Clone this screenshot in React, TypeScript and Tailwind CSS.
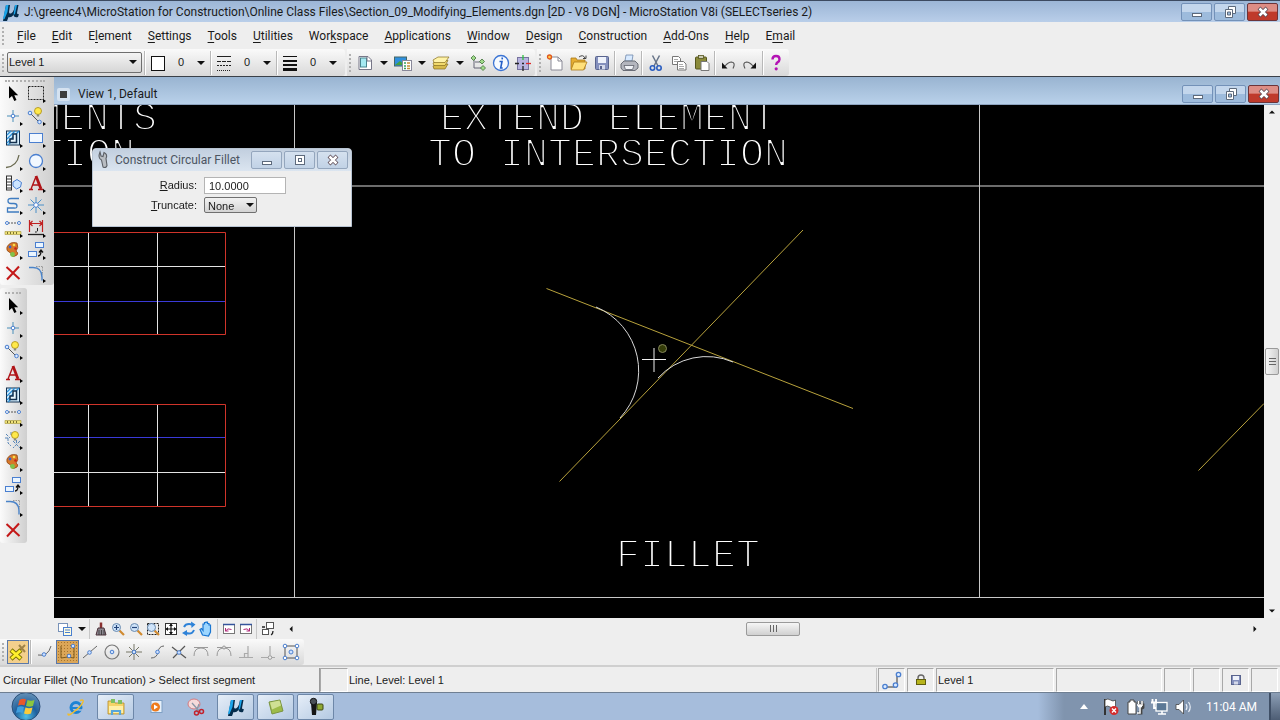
import type { ReactNode } from "react";

/* ── Icons, all drawn on a 22×22 grid ──────────────────────────────────── */
const BLUE = "#4a7fd0";

const bulb = (
  <>
    <circle cx="13" cy="6" r="3.5" fill="#ffe94a" stroke="#a88a10" strokeWidth="0.8" />
    <path d="M11.8 9.5h2.4v2h-2.4z" fill="#8a8a78" />
  </>
);

const magnifier = (
  <>
    <path d="M12.5 12.5l4.5 4.5" stroke="#d08a30" strokeWidth="2.2" />
    <circle cx="9.5" cy="9.5" r="4" fill="#cfe4fa" stroke="#6a8bb0" />
  </>
);

const ICONS: Record<string, ReactNode> = {
  pointer: <path d="M7 4v12.5l3-2.6 2.3 5 2.2-1-2.2-4.7h3.9z" fill="#000" />,
  fence: <rect x="3.5" y="4.5" width="15" height="13" fill="none" stroke="#222" strokeDasharray="2 1" />,
  point: (
    <>
      <path d="M11 5v12M5 11h12" stroke="#4a8fb8" />
      <circle cx="11" cy="11" r="1.8" fill="#fff" stroke={BLUE} />
    </>
  ),
  smartline: (
    <>
      <path d="M5 8l9 9" stroke="#555" />
      <circle cx="5" cy="8" r="1.8" fill="#dcebff" stroke={BLUE} />
      <circle cx="14.5" cy="17" r="1.8" fill="#dcebff" stroke={BLUE} />
      {bulb}
    </>
  ),
  hatch: (
    <>
      <rect x="4.5" y="4" width="13" height="14" fill="#d6efff" stroke="#14304e" />
      <path d="M5 8l4-4M5 12l8-8M5 16l12-12M6 18l3-3" stroke="#2a8fd8" strokeWidth="1.3" />
      <path d="M14.5 7v8.5H8v-3.5h3V7z" fill="#e9f7ff" stroke="#14304e" strokeWidth="1.5" />
    </>
  ),
  block: <rect x="4.5" y="6.5" width="13" height="9" fill="#f2f8ff" stroke={BLUE} />,
  arc: <path d="M4 17.5Q15 16.5 17 5" fill="none" stroke="#6a6a50" strokeWidth="1.3" />,
  circle: <circle cx="11" cy="11" r="6.5" fill="#f2f8ff" stroke={BLUE} strokeWidth="1.3" />,
  pattern: (
    <>
      <rect x="4.5" y="4" width="5" height="14" fill="#fff" stroke="#333" />
      <path d="M5 7h4M5 10h4M5 13h4M5 16h4" stroke="#333" />
      <path d="M11 10l4-2.5 4.5 3-1 4.5-4 2-3.5-3z" fill="#cde5ff" stroke={BLUE} />
    </>
  ),
  text: (
    <>
      <path d="M11 4l5 13" stroke="#b01418" strokeWidth="2.8" />
      <path d="M4 17.5h4M13 17.5h5.5M6 17L11 4.5M8 13h6" fill="none" stroke="#b01418" strokeWidth="1.4" />
    </>
  ),
  curve: <path d="M17 4.5H9q-3 0-3 2.5t3 2.5h3q3 0 3 2.5t-3 2H5.5v4H17" fill="none" stroke="#3f7cc0" strokeWidth="1.3" />,
  star: (
    <>
      <path d="M11 3v16M3 11h16M5.5 5.5l11 11M16.5 5.5l-11 11" stroke="#4a90c8" />
      <circle cx="11" cy="11" r="2.3" fill="#fff" stroke={BLUE} />
    </>
  ),
  measure: (
    <>
      <path d="M6 6h10" stroke="#555" strokeDasharray="2 1" />
      <circle cx="5" cy="6" r="1.5" fill="#fff" stroke={BLUE} />
      <circle cx="17" cy="6" r="1.5" fill="#fff" stroke={BLUE} />
      <path d="M3 14.5h16v3H3z" fill="#efe27a" stroke="#a39332" strokeWidth="0.6" />
      <path d="M5.5 15v2M8.5 15v2M11.5 15v2M14.5 15v2" stroke="#5d5419" strokeWidth="0.8" />
    </>
  ),
  dimension: (
    <>
      <path d="M4.5 3v12M17.5 3v12M5 6.5h12M7.5 4L5 6.5 7.5 9M14.5 4L17 6.5 14.5 9" fill="none" stroke="#c02020" strokeWidth="1.2" />
      <path d="M3 17.5h16" stroke="#222" strokeWidth="1.3" />
      <path d="M12.5 11v3q-1 1.5-2.5 1" fill="none" stroke="#222" />
    </>
  ),
  palette: (
    <>
      <path d="M15 4q-7-2-10 4-1 4 2 5 3 1 2 3 2 3 6 0 2-2-1-4 3-3 1-8z" fill="#d87828" stroke="#8f4812" strokeWidth="0.8" />
      <circle cx="8" cy="8" r="1.4" fill="#3b63c9" />
      <circle cx="12" cy="6" r="1.3" fill="#f4e04c" />
      <circle cx="13.5" cy="9.5" r="1.3" fill="#c9201c" />
      <circle cx="10.5" cy="15.5" r="2.4" fill="#7fc34a" />
    </>
  ),
  move: (
    <>
      <rect x="10.5" y="3.5" width="8" height="5" fill="#eaf5ff" stroke={BLUE} />
      <rect x="3.5" y="12.5" width="8" height="5" fill="#eaf5ff" stroke={BLUE} />
      <path d="M13 17q3 0 3-5M14 13.5l2-2.5 2 2.5" fill="none" stroke="#111" strokeWidth="1.3" />
    </>
  ),
  cross: <path d="M4.5 5l13 12M17 4.5L5 17.5" stroke="#c41818" strokeWidth="2" />,
  fillet: (
    <>
      <path d="M4 5.5h4q9 0 9 10v3" fill="none" stroke="#4a83c8" strokeWidth="1.4" />
      <path d="M11 4.5h7M17.5 5v8" stroke="#999" strokeDasharray="1.5 1" />
    </>
  ),
  modify: (
    <>
      <path d="M4 5l4 4M9 3v4M3 9h3M6 9v5l3 3M11 12l7 7M18 12l-7 7M14.5 11v3" fill="none" stroke="#5a87b8" strokeDasharray="3 1" />
      {bulb}
    </>
  ),
  models: (
    <>
      <path d="M5 4.5h9l3.5 3.5v9.5H5z" fill="#fff" stroke="#778" />
      <rect x="6.5" y="6" width="6" height="9" fill="#a5eaf2" stroke="#48848e" />
      <path d="M13 4v5h5" fill="none" stroke="#778" />
    </>
  ),
  references: (
    <>
      <rect x="2.5" y="5" width="12" height="9" fill="#2e8fdd" stroke="#466" />
      <path d="M3 13l5-4 5 4z" fill="#44a040" />
      <rect x="10.5" y="8.5" width="9" height="10" fill="#fff" stroke="#889" />
      <path d="M12 11h2M12 14h2M12 16.5h2" stroke="#38a060" strokeWidth="1.5" />
      <path d="M15 11h3M15 14h3M15 16.5h3" stroke="#c58f35" strokeWidth="1.5" />
    </>
  ),
  levels: (
    <>
      <path d="M3 14l4-2h11l-3 5H4z" fill="#d8bb4b" stroke="#856d1c" strokeWidth="0.7" />
      <path d="M3 11l4-2.5h11l-3 5H4z" fill="#f2da6c" stroke="#856d1c" strokeWidth="0.7" />
      <path d="M3 8l5-3h11l-4 5.5H4z" fill="#fff3a8" stroke="#856d1c" strokeWidth="0.7" />
    </>
  ),
  tree: (
    <>
      <path d="M6 7v9h8M7 10h6" fill="none" stroke="#667" />
      <path d="M5.5 3.5L8 6 5.5 8.5 3 6zM14 7l2.5 2.5L14 12l-2.5-2.5zM15 13.5l2.5 2.5-2.5 2.5-2.5-2.5z" fill="#9fd98a" stroke="#407038" strokeWidth="0.8" />
    </>
  ),
  info: (
    <>
      <circle cx="11" cy="11" r="7.5" fill="#f6faff" stroke="#3b74d4" strokeWidth="1.3" />
      <path d="M12.4 5.5l-.3 1.8M9.5 9.5H12L10.7 16h2" fill="none" stroke="#2560c8" strokeWidth="1.6" />
    </>
  ),
  accudraw: (
    <>
      <rect x="5.5" y="5.5" width="11" height="12" fill="#b7b3e0" stroke="#77739f" />
      <path d="M11 3v5" stroke="#2fc040" strokeWidth="1.3" />
      <path d="M14 11.5h5" stroke="#e02828" strokeWidth="1.3" />
      <path d="M11 14v5M3 11.5h4M10 11.5h2" stroke="#222" strokeWidth="1.3" />
    </>
  ),
  newFile: (
    <>
      <path d="M6 5h7l4 4v9H6z" fill="#fff" stroke="#8a8a96" />
      <path d="M13 5v4h4" fill="none" stroke="#8a8a96" />
      <circle cx="4.5" cy="5" r="2" fill="#ffce4c" stroke="#e0561c" strokeWidth="1.3" />
    </>
  ),
  open: (
    <>
      <path d="M3 6h5l1 2h8v9H3z" fill="#e6ae32" stroke="#a97a18" strokeWidth="0.8" />
      <path d="M6 10h13l-3.5 8H3z" fill="#ffe07a" stroke="#a97a18" strokeWidth="0.8" />
      <path d="M11 5q4-3 6 1M15 6.5h3v-3" fill="none" stroke="#444" />
    </>
  ),
  save: (
    <>
      <rect x="4.5" y="4.5" width="13" height="13" rx="1" fill="#8490bd" stroke="#59648e" />
      <rect x="7" y="5" width="8" height="6" fill="#eef2fb" />
      <rect x="8" y="13" width="6" height="4.5" fill="#d4d9ea" />
      <rect x="9" y="14" width="2" height="3" fill="#59648e" />
    </>
  ),
  saveSmall: (
    <>
      <rect x="6.5" y="6.5" width="9" height="9" fill="#8490bd" stroke="#59648e" />
      <rect x="8" y="7" width="6" height="4" fill="#eef2fb" />
      <rect x="9" y="12.5" width="4" height="3" fill="#d4d9ea" />
    </>
  ),
  print: (
    <>
      <path d="M7 9l1-6h7l-1 6z" fill="#d8eaff" stroke="#6e88ab" strokeWidth="0.8" />
      <path d="M3 12l3-3h11l3 3v4l-3 2.5H5L3 16z" fill="#b4b6be" stroke="#5f626c" strokeWidth="0.9" />
      <path d="M6 13.5h10l-1.5 4h-7z" fill="#f2f4f8" stroke="#5f626c" strokeWidth="0.8" />
    </>
  ),
  cut: (
    <>
      <path d="M7.5 3.5L13 14M14.5 3.5L9 14" stroke="#667388" strokeWidth="1.5" />
      <circle cx="7.5" cy="16" r="2.2" fill="none" stroke="#2a5dc0" strokeWidth="1.6" />
      <circle cx="14" cy="16" r="2.2" fill="none" stroke="#2a5dc0" strokeWidth="1.6" />
    </>
  ),
  copy: (
    <>
      <path d="M4.5 4.5h6l2 2v6h-8z" fill="#fff" stroke="#777" />
      <path d="M9.5 9.5h6L18 12v6H9.5z" fill="#fff" stroke="#777" />
      <path d="M6 7.5h4M6 9.5h3M11 12.5h4M11 14.5h5M11 16.5h5" stroke="#aaa" />
    </>
  ),
  paste: (
    <>
      <rect x="4.5" y="5" width="11" height="12" rx="1" fill="#8a8a3a" stroke="#55551e" />
      <rect x="7.5" y="3.5" width="5" height="3" fill="#c9c9b0" stroke="#55551e" strokeWidth="0.8" />
      <path d="M10 9.5h6l2 2v7h-8z" fill="#fff" stroke="#777" />
    </>
  ),
  undo: (
    <>
      <path d="M16 16.5q3-6-1.5-6.5-3 0-6.5 4" fill="none" stroke="#555" strokeWidth="1.1" />
      <path d="M5 10.5v6h5.5z" fill="#111" />
    </>
  ),
  help: (
    <>
      <path d="M7.5 7.5q0-3.5 3.5-3.5t3.5 3.2q0 2-2 3.2-1.3.8-1.3 2.6" fill="none" stroke="#b413b4" strokeWidth="2.4" />
      <circle cx="11.2" cy="16.8" r="1.6" fill="#b413b4" />
    </>
  ),
  style: (
    <>
      <path d="M4 4.5h14" stroke="#222" />
      <path d="M4 9.5h14" stroke="#222" strokeDasharray="4 1" />
      <path d="M4 13.5h14" stroke="#222" strokeDasharray="2 1" />
      <path d="M4 18.5h14" stroke="#222" strokeDasharray="1 1" />
    </>
  ),
  weight: (
    <>
      <path d="M4 4.5h14" stroke="#111" />
      <path d="M4 9h14" stroke="#111" strokeWidth="2" />
      <path d="M4 13h14" stroke="#111" strokeWidth="2" />
      <path d="M4 17.5h14" stroke="#111" strokeWidth="3" />
    </>
  ),
  color: <rect x="4.5" y="4.5" width="13" height="14" fill="#fff" stroke="#111" />,
  viewAttr: (
    <>
      <rect x="4.5" y="5.5" width="9" height="8" fill="#fff" stroke="#7892b8" />
      <rect x="9.5" y="9.5" width="8" height="8" fill="#fffce0" stroke="#4a7fd0" />
      <path d="M11 12h5M11 14.5h5" stroke="#4a7fd0" />
    </>
  ),
  brush: (
    <>
      <path d="M11 4.5v6" stroke="#8a3030" strokeWidth="2.5" />
      <path d="M8 10h6l2 7H6z" fill="#8c8790" stroke="#4b3038" />
      <path d="M9 12v5M11.5 12v5M14 12v5" stroke="#333" strokeWidth="0.8" />
    </>
  ),
  zoomIn: (
    <>
      {magnifier}
      <path d="M7 9.5h5M9.5 7v5" stroke="#24457a" strokeWidth="1.2" />
    </>
  ),
  zoomOut: (
    <>
      {magnifier}
      <path d="M7 9.5h5" stroke="#24457a" strokeWidth="1.2" />
    </>
  ),
  windowArea: (
    <>
      <rect x="5.5" y="5.5" width="11" height="11" fill="none" stroke="#222" strokeDasharray="2 1" />
      {magnifier}
    </>
  ),
  fit: (
    <>
      <rect x="5.5" y="5.5" width="11" height="11" fill="#fff" stroke="#333" />
      <path d="M11 6v10M6 11h10" stroke="#111" strokeWidth="1.2" />
      <path d="M11 5.5l2 2.5H9zM11 16.5l2-2.5H9zM5.5 11L8 9v4zM16.5 11L14 9v4z" fill="#111" />
    </>
  ),
  rotate: (
    <>
      <path d="M6 9q2-4 8-2.5M16 12q-2 5-8 3" fill="none" stroke="#2d82d8" strokeWidth="2" />
      <path d="M13 3.5l4.5 3-4 3.5zM9 12v6l-5-3z" fill="#2d82d8" />
    </>
  ),
  pan: <path d="M7.5 17L5 11.5l1.5-1 1.5 2V6h1.5V4.5H11V4h1.5v1.5H14V7h1.5v7l-2 4z" fill="#9cd6ff" stroke="#1976d2" strokeWidth="1.2" />,
  viewPrev: (
    <>
      <rect x="5.5" y="6.5" width="11" height="9" fill="#fff" stroke="#777" />
      <path d="M5 6.5h12" stroke="#35549c" strokeWidth="1.5" />
      <path d="M7.5 13q2-3.5 6-1.5M7.5 10v3h3" fill="none" stroke="#b02878" />
    </>
  ),
  copyView: (
    <>
      <rect x="9.5" y="4.5" width="7" height="6" fill="#fff" stroke="#555" />
      <rect x="5.5" y="11.5" width="6" height="5" fill="#fff" stroke="#555" />
      <path d="M14 17q2-1 2-4M5 9h3" fill="none" stroke="#222" strokeWidth="1.3" />
    </>
  ),
  snapLock: (
    <>
      <path d="M7 15L18 4M12 4l6 7" stroke="#a08348" strokeWidth="2" />
      <path d="M4 9l10 9M14 9L4 18" stroke="#7a7200" strokeWidth="4.5" />
      <path d="M4.5 9.5l9 8M13.5 9.5l-9 8" stroke="#fff02c" strokeWidth="2.8" />
    </>
  ),
  snapNear: (
    <>
      <path d="M4 14q10 2 13-9" fill="none" stroke="#666" />
      <circle cx="10" cy="13.5" r="1.8" fill="#cfe2ff" stroke={BLUE} />
    </>
  ),
  snapKey: (
    <>
      <path d="M4 5v12M4 17q7-2 13 0V6" fill="none" stroke="#7d5a1c" />
      <circle cx="12" cy="15" r="1.8" fill="#cfe2ff" stroke={BLUE} />
      <circle cx="16" cy="5" r="1.8" fill="#cfe2ff" stroke={BLUE} />
    </>
  ),
  snapMid: (
    <>
      <path d="M4 17L18 5" stroke="#666" />
      <circle cx="10.5" cy="11.5" r="1.8" fill="#cfe2ff" stroke={BLUE} />
    </>
  ),
  snapCenter: (
    <>
      <circle cx="11" cy="11" r="7" fill="none" stroke="#777" strokeWidth="1.2" />
      <circle cx="11" cy="11" r="1.8" fill="#cfe2ff" stroke={BLUE} />
    </>
  ),
  snapOrigin: (
    <>
      <path d="M11 3v16M3 11h16M6 6l10 10M16 6L6 16" stroke="#776" />
      <circle cx="11" cy="11" r="1.8" fill="#cfe2ff" stroke={BLUE} />
    </>
  ),
  snapBisect: (
    <>
      <path d="M5 17q6 0 7-6t6-6" fill="none" stroke="#666" />
      <circle cx="11.5" cy="11" r="1.8" fill="#cfe2ff" stroke={BLUE} />
    </>
  ),
  snapIntersect: (
    <>
      <path d="M4 6l14 11M17 5L5 17" stroke="#555" strokeWidth="1.2" />
      <circle cx="11" cy="11.5" r="1.8" fill="#cfe2ff" stroke={BLUE} />
    </>
  ),
  snapTangent: <path d="M4 6.5h14M4 15q0-8 7-8t7 8" fill="none" stroke="#999" />,
  snapTangentFrom: (
    <>
      <path d="M4 6.5h14M4 15q0-8 7-8t7 8" fill="none" stroke="#999" />
      <circle cx="11" cy="6.5" r="1.5" fill="#ddd" stroke="#999" />
    </>
  ),
  snapPerp: <path d="M4 16.5h14M13 16V5M13 12.5H9.5v4" fill="none" stroke="#aaa" strokeWidth="1.2" />,
  snapPerpFrom: (
    <>
      <path d="M4 16.5h14M13 14V5" fill="none" stroke="#aaa" strokeWidth="1.2" />
      <circle cx="13" cy="16.5" r="1.8" fill="#eee" stroke="#999" />
    </>
  ),
  snapMulti: (
    <>
      <rect x="5" y="5" width="12" height="12" fill="none" stroke="#555" />
      <circle cx="5" cy="5" r="1.8" fill="#fff" stroke={BLUE} />
      <circle cx="17" cy="5" r="1.8" fill="#fff" stroke={BLUE} />
      <circle cx="5" cy="17" r="1.8" fill="#fff" stroke={BLUE} />
      <circle cx="17" cy="17" r="1.8" fill="#fff" stroke={BLUE} />
      <circle cx="11" cy="11" r="2" fill="#cfe2ff" stroke={BLUE} />
    </>
  ),
  statusSnap: (
    <>
      <path d="M4 18h12V5" fill="none" stroke="#333" />
      <circle cx="4" cy="17.5" r="2.2" fill="#dcebff" stroke={BLUE} strokeWidth="1.3" />
      <circle cx="14.5" cy="16" r="2.2" fill="#dcebff" stroke={BLUE} strokeWidth="1.3" />
      <circle cx="17.5" cy="5.5" r="2.2" fill="#dcebff" stroke={BLUE} strokeWidth="1.3" />
    </>
  ),
  lock: (
    <>
      <path d="M8 11V9q0-3 3-3t3 3v2" fill="none" stroke="#666" strokeWidth="1.4" />
      <rect x="6.5" y="10.5" width="9" height="5" fill="#b7b41c" stroke="#5f5d10" />
    </>
  ),
  wrench: (
    <path d="M7 3l1 4 2 .5 1-4q4 2 2 6l1 7q-1 3-4 1.5L8.5 11Q4.5 9 7 3z" fill="#b9bdc2" stroke="#5c6066" strokeWidth="1.1" />
  ),
  mu: (
    <>
      <path d="M6 4h4L9 11q0 2 2 1.5 2-1 3-4L15 4h3.5L17 12q0 1.5 2 1l-1 3q-4 1-4.5-2-2.5 3-5 2L7 20H3z" fill="#052c4c" />
      <path d="M6 4h2.5L7.5 11l-3 7H3zM15 4h2l-2 9-1.5 1z" fill="#1ba4ea" />
    </>
  ),
  explorer: (
    <>
      <path d="M3 5h6l1 2h9v11H3z" fill="#f5d468" stroke="#b58b28" strokeWidth="0.8" />
      <path d="M6 3h4v4H6zM13 4h4v4h-4z" fill="#7fbf60" />
      <path d="M4 10h14v7H4z" fill="#fff0a8" />
      <path d="M7 19v-4h8v4" fill="none" stroke="#58a6d8" strokeWidth="2.2" />
    </>
  ),
  ie: (
    <>
      <circle cx="11" cy="11.5" r="5" fill="none" stroke="#1c83d4" strokeWidth="3" />
      <path d="M7 12h9.5" stroke="#1c83d4" strokeWidth="2" />
      <path d="M13.5 14h5" stroke="#a6bddc" strokeWidth="1.5" />
      <path d="M3.5 17.5Q2 20 6 18 16 11 18 6q1-3-3-1.5" fill="none" stroke="#f2bd2c" strokeWidth="1.5" />
    </>
  ),
  media: (
    <>
      <rect x="6" y="4.5" width="11" height="12" fill="#e6f0fa" stroke="#7fa0c4" />
      <circle cx="10.5" cy="11" r="4.5" fill="#ee7b1c" />
      <path d="M9 8.5v5l4-2.5z" fill="#fff" />
    </>
  ),
  snipping: (
    <>
      <ellipse cx="9" cy="8" rx="6" ry="5" fill="#f6dada" stroke="#d27a80" />
      <path d="M7 7l8 9M14 8l-3 8" stroke="#8a97a8" strokeWidth="1.3" />
      <circle cx="11.5" cy="17" r="2" fill="none" stroke="#c3222c" strokeWidth="1.5" />
      <circle cx="16.5" cy="15.5" r="2" fill="none" stroke="#c3222c" strokeWidth="1.5" />
    </>
  ),
  camtasia: (
    <>
      <path d="M4 6l11-2 3 11-11 3z" fill="#9dbb48" stroke="#7a9440" />
      <path d="M5 6.5l9.5-2L16 9.5l-9 4z" fill="#cfe094" />
    </>
  ),
  recorder: (
    <>
      <path d="M6 7h6l-1 12H7z" fill="#151515" />
      <circle cx="8.5" cy="5.5" r="3.2" fill="#4a5056" stroke="#111" />
      <rect x="12" y="8" width="6" height="6" rx="1" fill="#8fa832" stroke="#3d4716" />
    </>
  ),
  flag: (
    <>
      <path d="M5 3v16" stroke="#333" strokeWidth="2" />
      <path d="M5 4q3-2 5.5 0t5 0v7q-3 2-5.5 0T5 11z" fill="#fff" stroke="#444" strokeWidth="0.8" />
      <circle cx="14" cy="14.5" r="4.5" fill="#d42c2c" />
      <path d="M12 12.5l4 4M16 12.5l-4 4" stroke="#fff" strokeWidth="1.4" />
    </>
  ),
  battery: (
    <>
      <path d="M4 6h2V4h4v2h2v12H4z" fill="#fff" stroke="#444" />
      <path d="M14.5 5v3M18 5v3M14 9h5v2.5L17 13v4h-3" fill="none" stroke="#444" strokeWidth="2.8" />
      <path d="M14.5 5v3M18 5v3M13 9h6M14 10.5h4M16 10v7h-3" fill="none" stroke="#fff" strokeWidth="1.5" />
    </>
  ),
  network: (
    <>
      <rect x="8" y="6.5" width="11" height="8.5" fill="#5b7896" stroke="#fff" strokeWidth="1.3" />
      <path d="M10 18h8M14 15v3" stroke="#fff" strokeWidth="1.6" />
      <path d="M4.5 3v3M8 3v3M3 6.5h6M6 7v5h2" fill="none" stroke="#fff" strokeWidth="1.8" />
    </>
  ),
  volume: (
    <>
      <path d="M4 8.5h3L11.5 4v14L7 13.5H4z" fill="#fff" stroke="#444" strokeWidth="0.8" />
      <path d="M14 8q2 3 0 6M16.5 6q3.5 5 0 10" fill="none" stroke="#e8eef6" strokeWidth="1.2" />
    </>
  ),
};

function Icon({ name, flip }: { name: string; flip?: boolean }) {
  return (
    <svg viewBox="0 0 22 22" className={`block size-[22px] shrink-0 ${flip ? "-scale-x-100" : ""}`} aria-hidden="true">
      {ICONS[name]}
    </svg>
  );
}

/* Small solid triangle used by drop-downs and scroll bars */
function Caret({ dir = "down", small = false }: { dir?: "down" | "up" | "left" | "right"; small?: boolean }) {
  const paths = {
    down: "M0 2h8L4 6z",
    up: "M0 6h8L4 2z",
    left: "M6 0v8L2 4z",
    right: "M2 0v8l4-4z",
  };
  return (
    <svg viewBox="0 0 8 8" className={`block shrink-0 ${small ? "size-[6px]" : "size-2"}`} aria-hidden="true">
      <path d={paths[dir]} fill="#111" />
    </svg>
  );
}

function Tool({ name, menu, flip, wide }: { name: string; menu?: boolean; flip?: boolean; wide?: boolean }) {
  return (
    <button
      type="button"
      aria-label={name}
      className={`relative flex h-[22px] items-center justify-center ${wide ? "w-[23px]" : "w-[22px]"}`}
    >
      <Icon name={name} flip={flip} />
      {menu && (
        <svg viewBox="0 0 4 6" className="absolute right-0 bottom-0 h-[6px] w-1" aria-hidden="true">
          <path d="M0 1v4l3-2z" fill="#000" />
        </svg>
      )}
    </button>
  );
}

function Drop({ label }: { label: string }) {
  return (
    <button type="button" aria-label={label} className="flex h-5 w-4 items-center justify-center">
      <Caret />
    </button>
  );
}

function Sep() {
  return <span className="mx-px h-6 w-[2px] shrink-0 border-r border-l border-r-white border-l-[#b8b8b8]" />;
}

function Grip() {
  return <span className="mx-[2px] h-[18px] w-[3px] shrink-0 border-l-2 border-dotted border-[#b0b0b0]" />;
}

/* ── Window buttons ────────────────────────────────────────────────────── */
function WindowButtons({ dialog }: { dialog?: boolean }) {
  const base = dialog
    ? "border-[#94a6bd] bg-linear-to-b from-[#d5e1ef] to-[#c1d2e6]"
    : "border-[#7391b8] bg-linear-to-b from-[#c3d6ec] from-50% to-[#9dbbdc] to-50%";
  const close = dialog ? base : "border-[#6c3439] bg-linear-to-b from-[#dd8d85] from-45% to-[#bf3a2b] to-50%";
  const size = "flex h-[18px] w-[31px] items-center justify-center rounded-[2px] border";
  return (
    <div className="flex gap-[2px]">
      <button type="button" aria-label="Minimize" className={`${size} ${base}`}>
        <svg viewBox="0 0 14 12" className="h-3 w-[14px]">
          <rect x="2.5" y="7.5" width="9" height="3" fill="#fff" stroke="#5d6a7c" />
        </svg>
      </button>
      <button type="button" aria-label="Restore" className={`${size} ${base}`}>
        <svg viewBox="0 0 14 12" className="h-3 w-[14px]" fill="#fff" stroke="#5d6a7c">
          {dialog ? (
            <>
              <rect x="2.5" y="1.5" width="9" height="9" />
              <rect x="5.5" y="4.5" width="3" height="3" />
            </>
          ) : (
            <>
              <path d="M5.5.5h7v7h-7z" />
              <path d="M2.5 3.5h7v8h-7z" />
              <path d="M4.5 6h3v3h-3z" fill="#9dbbdc" />
            </>
          )}
        </svg>
      </button>
      <button type="button" aria-label="Close" className={`${size} ${close}`}>
        <svg viewBox="0 0 14 12" className="h-3 w-[14px]">
          <path d="M3 2l8 8M11 2l-8 8" stroke="#5d4a54" strokeWidth="4" />
          <path d="M3.5 2.5l7 7M10.5 2.5l-7 7" stroke="#fff" strokeWidth="2.5" />
        </svg>
      </button>
    </div>
  );
}

/* ── Menu and toolbars ─────────────────────────────────────────────────── */
/* before the mnemonic, mnemonic, after it */
const MENUS: [string, string, string][] = [
  ["", "F", "ile"],
  ["", "E", "dit"],
  ["E", "l", "ement"],
  ["", "S", "ettings"],
  ["", "T", "ools"],
  ["", "U", "tilities"],
  ["Wor", "k", "space"],
  ["", "A", "pplications"],
  ["", "W", "indow"],
  ["", "D", "esign"],
  ["", "C", "onstruction"],
  ["", "A", "dd-Ons"],
  ["", "H", "elp"],
  ["E", "m", "ail"],
];

const BAR = "flex items-center rounded-r-[3px] bg-linear-to-b from-[#fafafa] to-[#d9d9d9]";
const UI_FONT = "font-['Roboto','Segoe_UI',sans-serif] text-[12px]";
const SMALL_FONT = "font-['Liberation_Sans',Arial,sans-serif] text-[11px]";

function Attribute({ icon, label }: { icon: string; label: string }) {
  return (
    <div className="flex items-center">
      <Icon name={icon} />
      <span className={`w-6 text-center ${SMALL_FONT}`}>0</span>
      <Drop label={label} />
    </div>
  );
}

function MainToolbar() {
  return (
    <div className="flex h-[28px] shrink-0 items-stretch gap-[2px] border-b border-[#3a4048]">
      <div className={`${BAR} w-[345px]`}>
        <Grip />
        <div className="relative mr-px">
          <select
            aria-label="Active level"
            className={`block h-[21px] w-[135px] appearance-none rounded-[2px] border border-[#6f6f6f] bg-linear-to-b from-[#f4f4f4] to-[#d6d6d6] pl-px ${SMALL_FONT}`}
          >
            <option>Level 1</option>
          </select>
          <span className="pointer-events-none absolute top-[6px] right-[5px]">
            <Caret />
          </span>
        </div>
        <Sep />
        <Attribute icon="color" label="Color" />
        <Sep />
        <Attribute icon="style" label="Line style" />
        <Sep />
        <Attribute icon="weight" label="Line weight" />
      </div>
      <div className={`${BAR} w-[188px]`}>
        <Grip />
        <Tool name="models" />
        <Drop label="Models menu" />
        <Tool name="references" />
        <Drop label="References menu" />
        <Tool name="levels" />
        <Drop label="Levels menu" />
        <Tool name="tree" />
        <Tool name="info" />
        <Tool name="accudraw" />
      </div>
      <div className={`${BAR} w-[252px]`}>
        <Grip />
        <Tool name="newFile" wide />
        <Tool name="open" wide />
        <Tool name="save" wide />
        <Sep />
        <Tool name="print" wide />
        <Sep />
        <Tool name="cut" wide />
        <Tool name="copy" wide />
        <Tool name="paste" wide />
        <Sep />
        <Tool name="undo" />
        <Tool name="undo" flip />
        <Sep />
        <Tool name="help" />
      </div>
    </div>
  );
}

/* ── Left dock ─────────────────────────────────────────────────────────── */
const MAIN_TOOLS = [
  "pointer", "fence",
  "point", "smartline",
  "hatch", "block",
  "arc", "circle",
  "pattern", "text",
  "curve", "star",
  "measure", "dimension",
  "palette", "move",
  "cross", "fillet",
];

const TASK_TOOLS = [
  "pointer", "point", "smartline", "text", "hatch", "measure",
  "modify", "palette", "move", "fillet", "cross",
];

function Dock() {
  return (
    <aside className="flex w-[54px] shrink-0 flex-col items-start gap-[3px] bg-[#eeeeee]">
      <div className="w-full rounded-b-[3px] bg-linear-to-r from-[#fbfbfb] to-[#cfcfcf] pb-px pl-px">
        <div className="mx-1 h-[5px] w-10 border-b-2 border-dotted border-[#b0b0b0]" />
        <div className="grid h-[202px] w-[46px] grid-cols-2 grid-rows-9 items-center">
          {MAIN_TOOLS.map((name, i) => (
            <Tool key={name} name={name} wide menu={i !== 0 && name !== "cross"} />
          ))}
        </div>
      </div>
      <div className="w-[27px] rounded-[3px] bg-linear-to-r from-[#fbfbfb] to-[#cfcfcf] pb-[2px] pl-px">
        <div className="mx-1 h-[6px] w-4 border-b-2 border-dotted border-[#b0b0b0]" />
        <div className="grid h-[247px] w-[23px] grid-rows-11 items-center">
          {TASK_TOOLS.map((name) => (
            <Tool key={name} name={name} wide menu={name !== "cross"} />
          ))}
        </div>
      </div>
    </aside>
  );
}

/* ── Drawing ───────────────────────────────────────────────────────────── */
/* The black outline over the white fill leaves a hairline of each letter */
const LETTERING =
  "fill-white stroke-black stroke-[2.1px] font-['Liberation_Mono','Courier_New',monospace] text-[40px]";

function Drawing() {
  return (
    <svg className="absolute inset-0 h-full w-full will-change-transform" role="img" aria-label="View 1">
      <g className={LETTERING}>
        <text x="-17" y="25">MENTS</text>
        <text x="-15" y="61">TION</text>
        <text x="386" y="25">EXTEND ELEMENT</text>
        <text x="374" y="61">TO INTERSECTION</text>
        <text x="562" y="462">FILLET</text>
      </g>

      {/* sheet grid */}
      <g fill="none">
        <path d="M0 81h1210" strokeWidth="2" stroke="#6c6c6c" />
        <path d="M240.5 0v492M925.5 0v492M0 492.5h1210" stroke="#c8c8c8" />
      </g>

      {/* tables */}
      <g fill="none">
        <path d="M0 161.5h171M0 367.5h171" stroke="#e4e4e4" />
        <path d="M0 196.5h171M0 332.5h171" stroke="#3a3ad8" />
        <path d="M34.5 128v102M103.5 128v102M34.5 300v102M103.5 300v102" stroke="#e4e4e4" />
        <path d="M0 127.5h171.5v102H0M0 299.5h171.5v102H0" stroke="#d0342a" />
      </g>

      {/* segments and their fillets */}
      <path d="M492.5 183.5l306.5 120M749 125L505.5 376.5M1210 298.5l-65.5 67" stroke="#b8a23c" />
      <path d="M542 202a69 69 0 0 1 24 111M604 273a66 66 0 0 1 75-16" fill="none" stroke="#d8d8d8" />
      <path d="M588 254.5h24M600 243v24" stroke="#f0f0f0" />
      <circle cx="608.5" cy="243.5" r="4" fill="#343c08" stroke="#85875c" />
    </svg>
  );
}

function FilletDialog() {
  return (
    <section className={`absolute top-[43px] left-[38px] w-[260px] rounded-t-[4px] border border-[#b8c4d2] bg-[#eeeeee] pb-[12px] ${SMALL_FONT}`}>
      <header className="flex h-[22px] items-center rounded-t-[4px] bg-linear-to-b from-[#c2cfdf] to-[#dbe5f0] pr-[3px]">
        <Icon name="wrench" />
        <h2 className={`flex-1 text-[#4c5562] ${UI_FONT}`}>Construct Circular Fillet</h2>
        <WindowButtons dialog />
      </header>
      <div className="mt-[6px] grid grid-cols-[104px_1fr] items-center gap-x-[7px] gap-y-[3px]">
        <label htmlFor="radius" className="text-right">
          <u>R</u>adius:
        </label>
        <input
          id="radius"
          defaultValue="10.0000"
          className="h-[17px] w-[82px] border border-[#b4b4b4] bg-white px-1"
        />
        <label htmlFor="truncate" className="text-right">
          <u>T</u>runcate:
        </label>
        <div className="relative w-[53px]">
          <select
            id="truncate"
            className="block h-4 w-[53px] appearance-none rounded-[2px] border border-[#707070] bg-linear-to-b from-[#f2f2f2] to-[#d4d4d4] pl-[3px]"
          >
            <option>None</option>
          </select>
          <span className="pointer-events-none absolute top-1 right-[3px]">
            <Caret />
          </span>
        </div>
      </div>
    </section>
  );
}

const THUMB = "flex items-center justify-center rounded-[2px] border border-[#9a9a9a]";

function View() {
  return (
    <section className="flex min-w-0 flex-1 flex-col">
      <header className="flex h-[28px] shrink-0 items-center border-b border-[#8ea4c0] bg-linear-to-b from-[#99b4d1] to-[#b9d1ea] pt-[7px] pr-px pl-[3px]">
        <button type="button" aria-label="View menu" className="flex size-[13px] items-center justify-center rounded-[2px] bg-[#d5e2f0]">
          <span className="size-[7px] bg-[#3d3d3d]" />
        </button>
        <h1 className={`flex-1 pl-2 ${UI_FONT}`}>View 1, Default</h1>
        <WindowButtons />
      </header>

      <div className="flex min-h-0 flex-1">
        <div className="relative min-w-0 flex-1 overflow-hidden bg-black">
          <Drawing />
          <FilletDialog />
        </div>
        <div className="flex w-4 shrink-0 flex-col items-center justify-between bg-[#f0f0f0] py-1">
          <Caret dir="up" small />
          <div className={`${THUMB} h-[27px] w-[14px] flex-col gap-[2px] bg-linear-to-r from-[#f6f6f6] to-[#d0d0d0]`}>
            <span className="h-px w-[7px] bg-[#666]" />
            <span className="h-px w-[7px] bg-[#666]" />
            <span className="h-px w-[7px] bg-[#666]" />
          </div>
          <Caret small />
        </div>
      </div>

      <div className="flex h-[21px] shrink-0 items-center pr-4">
        <div className="flex items-center">
          <button type="button" aria-label="View attributes">
            <Icon name="viewAttr" />
          </button>
          <button type="button" aria-label="View attributes menu" className="flex w-[12px] justify-center">
            <Caret />
          </button>
          <span className="mr-[2px] ml-px h-5 w-px bg-[#c8c8c8]" />
          <div className="grid w-[123px] grid-cols-7 justify-items-center">
            {["brush", "zoomIn", "zoomOut", "windowArea", "fit", "rotate", "pan"].map((name) => (
              <button key={name} type="button" aria-label={name} className="flex w-[17px] justify-center">
                <Icon name={name} />
              </button>
            ))}
          </div>
          <span className="mx-[2px] h-5 w-px bg-[#c8c8c8]" />
          <button type="button" aria-label="View previous" className="flex w-[17px] justify-center">
            <Icon name="viewPrev" />
          </button>
          <button type="button" aria-label="View next" className="flex w-[17px] justify-center">
            <Icon name="viewPrev" flip />
          </button>
          <span className="mx-[2px] h-5 w-px bg-[#c8c8c8]" />
          <button type="button" aria-label="Copy view" className="flex w-[17px] justify-center">
            <Icon name="copyView" />
          </button>
        </div>
        <div className="flex flex-1 items-center justify-between px-[6px] pl-3">
          <Caret dir="left" small />
          <div className={`${THUMB} h-[14px] w-[54px] gap-[2px] bg-linear-to-b from-[#f6f6f6] to-[#d0d0d0]`}>
            <span className="h-[7px] w-px bg-[#666]" />
            <span className="h-[7px] w-px bg-[#666]" />
            <span className="h-[7px] w-px bg-[#666]" />
          </div>
          <Caret dir="right" small />
        </div>
      </div>
    </section>
  );
}

/* ── Snap bar, status bar, task bar ────────────────────────────────────── */
const SNAPS = [
  "snapNear", "snapKey", "snapMid", "snapCenter", "snapOrigin", "snapBisect",
  "snapIntersect", "snapTangent", "snapTangentFrom", "snapPerp", "snapPerpFrom", "snapMulti",
];

function SnapBar() {
  return (
    <div className="flex h-[26px] shrink-0">
      <div className={`${BAR} pr-[2px]`}>
        <Grip />
        <button type="button" aria-label="AccuSnap" className="flex h-6 w-[22px] items-center justify-center border border-[#5b78a8] bg-[#f3cf8c]">
          <Icon name="snapLock" />
        </button>
        <Sep />
        <div className="ml-px grid w-[268px] grid-cols-12 items-center">
          {SNAPS.map((name) => (
            <button
              key={name}
              type="button"
              aria-label={name}
              className={
                name === "snapKey"
                  ? "flex justify-center border border-[#5b78a8] bg-[#dba658] bg-[radial-gradient(#a8752c_1px,transparent_1px)] bg-size-[3px_3px]"
                  : "flex justify-center"
              }
            >
              <Icon name={name} />
            </button>
          ))}
        </div>
      </div>
    </div>
  );
}

const CELL = "mr-[2px] flex items-center border border-t-[#a8a8a8] border-r-white border-b-white border-l-[#a8a8a8]";

function StatusBar() {
  return (
    <footer className={`flex h-[28px] shrink-0 border-t-2 border-b border-t-[#cfcfcf] border-b-[#6f7f92] pt-px ${SMALL_FONT}`}>
      <p className="flex w-[320px] items-center border-r border-[#9a9a9a] pl-[3px]">
        Circular Fillet (No Truncation) &gt; Select first segment
      </p>
      <p className="flex flex-1 items-center border-r border-[#c4c4c4]">
        <span className="mr-px h-full w-7 border border-t-[#a8a8a8] border-r-white border-b-white border-l-[#a8a8a8]" />
        Line, Level: Level 1
      </p>
      <div className={`${CELL} ml-px w-[27px] justify-center`}>
        <Icon name="statusSnap" />
      </div>
      <div className={`${CELL} w-[27px] justify-center`}>
        <Icon name="lock" />
      </div>
      <div className={`${CELL} w-[118px] pl-px`}>Level 1</div>
      <div className={`${CELL} w-[106px]`} />
      <div className={`${CELL} w-[27px]`} />
      <div className={`${CELL} w-[27px]`} />
      <div className={`${CELL} w-[27px] justify-center`}>
        <Icon name="saveSmall" />
      </div>
      <div className={`${CELL} w-[27px]`} />
    </footer>
  );
}

const TASKS = [
  { name: "ie", running: false },
  { name: "explorer", running: true },
  { name: "media", running: false },
  { name: "snipping", running: false },
  { name: "mu", running: true },
  { name: "camtasia", running: true },
  { name: "recorder", running: true },
];

function TaskBar() {
  return (
    <nav className="flex h-[27px] shrink-0 items-center bg-[#a6bddc]">
      <button type="button" aria-label="Start" className="mr-1 ml-[10px]">
        <svg viewBox="0 0 32 28" className="block h-7 w-8">
          <defs>
            <radialGradient id="orb" cx="50%" cy="85%" r="80%">
              <stop offset="0" stopColor="#4fc0e8" />
              <stop offset="0.5" stopColor="#1e5f9c" />
              <stop offset="1" stopColor="#5f8cb4" />
            </radialGradient>
          </defs>
          <circle cx="16" cy="13.5" r="14" fill="url(#orb)" stroke="#2c4f78" />
          <path d="M9.5 7q3.5-2 6.5-.5L14.5 12.5q-3-1.5-6.5 0z" fill="#e8582a" />
          <path d="M17.5 7q3.5 1.5 7 0L23 13q-3.5 1.5-7 0z" fill="#8cc63e" />
          <path d="M7.5 14q3.5-1.5 6.5 0L12.5 20q-3-1.5-6.5 0z" fill="#3f9fe0" />
          <path d="M15.5 14.5q3.5 1.5 7 0L21 20.5q-3.5 1.5-7 0z" fill="#fbcb3a" />
        </svg>
      </button>
      <div className="flex gap-[3px] pl-[11px]">
        {TASKS.map(({ name, running }) => (
          <button
            key={name}
            type="button"
            aria-label={name}
            className={`flex h-[26px] w-[37px] items-center justify-center rounded-[2px] ${
              running ? "border border-[#6d87a8] bg-linear-to-br from-[#e6eef8] to-[#b4c9e2]" : ""
            }`}
          >
            <Icon name={name} />
          </button>
        ))}
      </div>
      <div className="ml-auto flex h-full items-center bg-linear-to-r from-[#a6bddc] to-[#8094ae] to-[26px] pl-[36px]">
        <button type="button" aria-label="Show hidden icons" className="flex w-5 justify-center">
          <svg viewBox="0 0 8 5" className="h-[5px] w-2">
            <path d="M0 5h8L4 0z" fill="#fff" />
          </svg>
        </button>
        <div className="ml-[6px] flex gap-[2px]">
          <Icon name="flag" />
          <Icon name="battery" />
          <Icon name="network" />
          <Icon name="volume" />
        </div>
        <time className={`w-[75px] text-center text-white ${UI_FONT}`}>11:04 AM</time>
        <button
          type="button"
          aria-label="Show desktop"
          className="h-full w-[11px] border-l-2 border-[#3f4f66] bg-linear-to-b from-[#8d9fb6] to-[#4d5d74]"
        />
      </div>
    </nav>
  );
}

/* ── App ───────────────────────────────────────────────────────────────── */
export default function App() {
  return (
    <div className="flex h-screen flex-col overflow-hidden bg-[#eeeeee] text-[#1a1a1a]">
      <header className="flex h-[22px] shrink-0 items-center border-t border-[#3c4a60] bg-linear-to-b from-[#9cb6d6] to-[#b9cee9] pr-[2px]">
        <Icon name="mu" />
        <p className={`flex-1 pl-[2px] whitespace-nowrap ${UI_FONT}`}>
          J:\greenc4\MicroStation for Construction\Online Class Files\Section_09_Modifying_Elements.dgn [2D - V8 DGN] - MicroStation V8i (SELECTseries 2)
        </p>
        <WindowButtons />
      </header>
      <nav className="flex h-[27px] shrink-0 items-center">
        <Grip />
        <ul className={`ml-[10px] flex gap-4 ${UI_FONT}`}>
          {MENUS.map(([before, key, after]) => (
            <li key={before + key + after}>
              <button type="button">
                {before}
                <span className="underline underline-offset-2">{key}</span>
                {after}
              </button>
            </li>
          ))}
        </ul>
      </nav>
      <MainToolbar />
      <main className="flex min-h-0 flex-1">
        <Dock />
        <View />
      </main>
      <SnapBar />
      <StatusBar />
      <TaskBar />
    </div>
  );
}
